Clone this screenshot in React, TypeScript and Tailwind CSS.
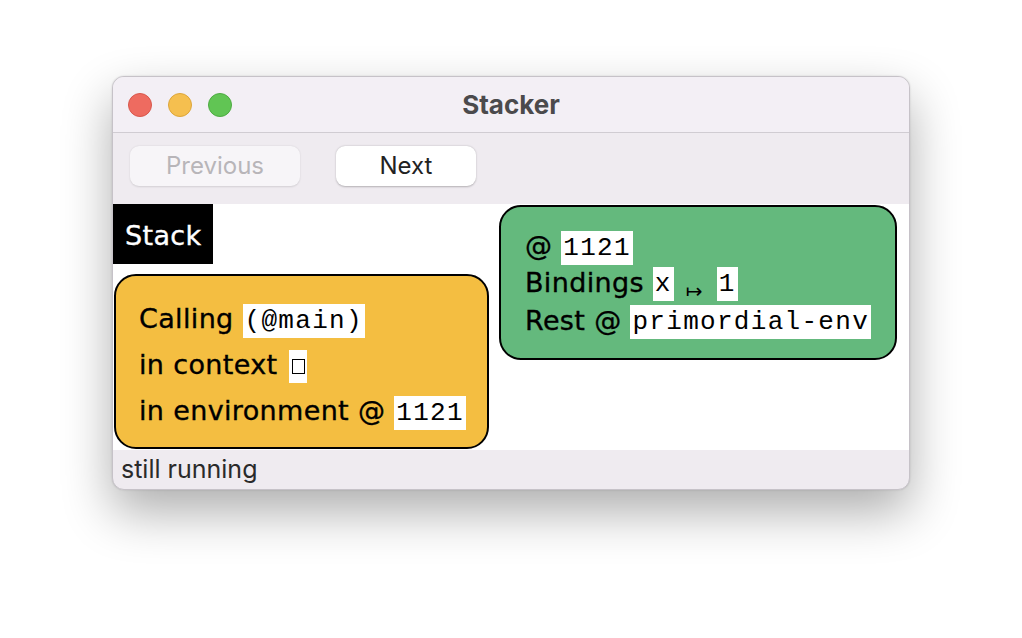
import React from 'react';

const sans = "font-['DejaVu_Sans',sans-serif] tracking-[0.35px] [-webkit-text-stroke:0.35px_black]";
const mono = "font-['Liberation_Mono',monospace]";
const ui = "font-['Inter',sans-serif]";

const Code: React.FC<{ children: React.ReactNode }> = ({ children }) => (
  <span className={`${mono} inline-block bg-white px-[2px] h-[34px] leading-[34px] text-[26px] tracking-[1.3px] align-middle text-black [-webkit-text-stroke:0px]`}>
    {children}
  </span>
);

const Hole: React.FC = () => (
  <span className="inline-flex items-center justify-center bg-white w-[18px] h-[33px] ml-[3px] align-middle">
    <span className="block w-[13px] h-[15px] border-[1.5px] border-black" />
  </span>
);

export default function App() {
  return (
    <div className="w-[1022px] h-[638px] bg-white pt-[76px] pl-[112px]">
      <div className="w-[798px] h-[414px] rounded-[12px] border border-[#c6c2c8] overflow-hidden flex flex-col bg-[#efebf0] shadow-[0_22px_50px_rgba(0,0,0,0.32),0_0_2px_rgba(0,0,0,0.15)]">
        {/* title bar */}
        <div className="relative h-[56px] shrink-0 bg-[#f3eff5] border-b border-[#d0ccd2] flex items-center">
          <div className="flex gap-[16px] pl-[15px]">
            <span className="w-[24px] h-[24px] rounded-full bg-[#ee6b60] border border-[#d8574c]" />
            <span className="w-[24px] h-[24px] rounded-full bg-[#f5bf4f] border border-[#dda63a]" />
            <span className="w-[24px] h-[24px] rounded-full bg-[#61c554] border border-[#4eab42]" />
          </div>
          <div className={`${ui} absolute inset-0 flex items-center justify-center text-[26px] font-bold text-[#4b4a4c]`}>
            Stacker
          </div>
        </div>

        {/* toolbar */}
        <div className="h-[71px] shrink-0 flex items-start pt-[13px] pl-[17px] gap-[36px]">
          <button className={`${ui} w-[170px] h-[40px] rounded-[9px] bg-[#f7f5f8] text-[#b8b5b9] text-[24px] shadow-[0_0.5px_2px_rgba(0,0,0,0.12)]`}>
            Previous
          </button>
          <button className={`${ui} w-[140px] h-[40px] rounded-[9px] bg-white text-[#222] text-[24px] shadow-[0_0.5px_2px_rgba(0,0,0,0.25)]`}>
            Next
          </button>
        </div>

        {/* content */}
        <div className="h-[246px] shrink-0 bg-white flex gap-[10px]">
          <div className="w-[376px] flex flex-col">
            <div className={`${sans} w-[100px] h-[60px] bg-black text-white text-[27px] [-webkit-text-stroke:0.35px_white] flex items-center pl-[12px] pt-[4px]`}>
              Stack
            </div>
            <div className={`${sans} mt-[10px] ml-[1px] w-[375px] h-[175px] bg-[#f4be41] border-2 border-black rounded-[22px] pl-[23px] pt-[20px] text-[27px] leading-[46px] text-black`}>
              <div>Calling <Code>(@main)</Code></div>
              <div>in context <Hole /></div>
              <div>in environment @ <Code>1121</Code></div>
            </div>
          </div>
          <div className={`${sans} mt-[1px] w-[398px] h-[155px] bg-[#64b97d] border-2 border-black rounded-[22px] pl-[24px] pt-[21px] text-[27px] leading-[36px] text-black`}>
            <div>@ <Code>1121</Code></div>
            <div>
              Bindings <Code>x</Code>
              <span className="inline-block text-[20px] relative top-[6px] ml-[12px] mr-[14px] [-webkit-text-stroke:0px]">↦</span>
              <Code>1</Code>
            </div>
            <div>Rest @ <Code>primordial-env</Code></div>
          </div>
        </div>

        {/* status */}
        <div className={`${ui} flex-1 flex items-center pl-[8px] text-[25px] text-[#2a2a2a]`}>
          still running
        </div>
      </div>
    </div>
  );
}
